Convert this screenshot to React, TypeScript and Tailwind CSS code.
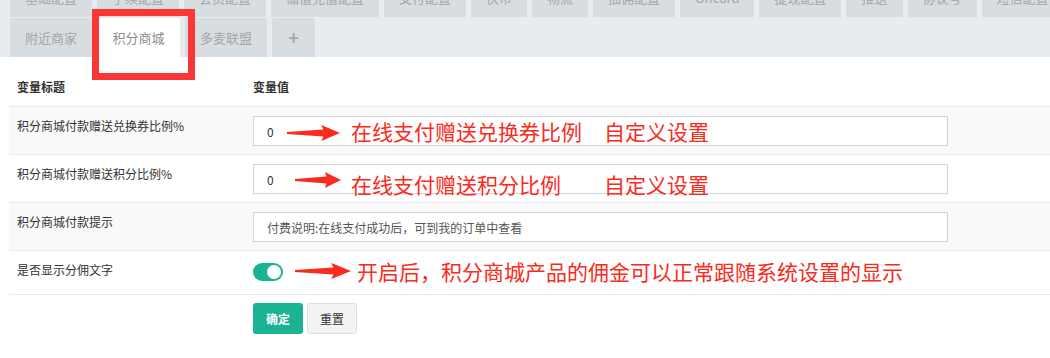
import React from "react";

const topTabs = [
  "基础配置",
  "手续配置",
  "会员配置",
  "储值充值配置",
  "支付配置",
  "快币",
  "物流",
  "抽佣配置",
  "Oncard",
  "提现配置",
  "推送",
  "协议号",
  "短信配置",
];

const Arrow = ({ width = 54 }: { width?: number }) => (
  <svg width={width} height="16" viewBox="0 0 54 16" preserveAspectRatio="none">
    <polygon points="0,7 37,4.5 35,0 54,8 35,16 37,11.5 0,9" fill="#fa2a1c" />
  </svg>
);

type RowProps = {
  label: string;
  shaded?: boolean;
  children: React.ReactNode;
  note?: React.ReactNode;
};

const Row = ({ label, shaded, children, note }: RowProps) => (
  <div
    className={`relative flex border-t border-[#e7eaec] ${shaded ? "bg-[#f9f9f9]" : "bg-white"}`}
  >
    <div className="w-[236px] shrink-0 pl-[8px] pt-[9px] text-[12px] leading-[20px] text-[#333]">
      {label}
    </div>
    <div className="flex-1 pl-[8px] pt-[9px] pb-[8px]">{children}</div>
    {note}
  </div>
);

const Note = ({ children }: { children: React.ReactNode }) => (
  <span className="text-[21px] leading-[28px] text-[#fa2a1c] whitespace-pre">{children}</span>
);

export default function App() {
  return (
    <div
      className="relative w-[1050px] h-[358px] overflow-hidden bg-white"
      style={{ fontFamily: '"Noto Sans CJK SC", "Liberation Sans", sans-serif' }}
    >
      {/* tab strip */}
      <div className="bg-[#e8ecee] pl-[10px] h-[57px]">
        <div className="flex items-end gap-[5px] h-[17px] overflow-hidden">
          {topTabs.map((t) => (
            <div
              key={t}
              className="shrink-0 h-[39px] px-[15px] flex items-center bg-[#d8dde2] text-[13px] text-[#a3a7ab] rounded-t-[2px]"
            >
              {t}
            </div>
          ))}
        </div>
        <div className="flex gap-[5px] mt-[1px] h-[39px]">
          <div className="px-[15px] flex items-center bg-[#d8dde2] text-[13px] text-[#a3a7ab] rounded-t-[2px]">
            附近商家
          </div>
          <div className="w-[83px] flex items-center justify-center bg-white text-[13px] text-[#8c8f92] rounded-t-[2px]">
            积分商城
          </div>
          <div className="px-[15px] flex items-center bg-[#d8dde2] text-[13px] text-[#a3a7ab] rounded-t-[2px]">
            多麦联盟
          </div>
          <div className="w-[43px] flex items-center justify-center bg-[#d8dde2] text-[18px] font-bold text-[#a3a7ab] rounded-t-[2px]">
            +
          </div>
        </div>
      </div>

      {/* highlight box */}
      <div className="absolute left-[92px] top-[9px] w-[103px] h-[71px] border-[7px] border-[#fb3636]" />

      {/* table */}
      <div className="ml-[9px]">
        <div className="flex h-[49px] items-end pb-[10px] text-[12px] font-bold text-[#333]">
          <div className="w-[236px] pl-[8px]">变量标题</div>
          <div className="pl-[8px]">变量值</div>
        </div>

        <Row
          label="积分商城付款赠送兑换券比例%"
          shaded
          note={
            <>
              <div className="absolute left-[278px] top-[18px]">
                <Arrow width={53} />
              </div>
              <div className="absolute left-[342px] top-[10px]">
                <Note>在线支付赠送兑换券比例</Note>
              </div>
              <div className="absolute left-[595px] top-[10px]">
                <Note>自定义设置</Note>
              </div>
            </>
          }
        >
          <input
            readOnly
            value="0"
            className="w-[695px] h-[30px] border border-[#d0d5dd] bg-white px-[13px] text-[12px] text-[#333] outline-none"
          />
        </Row>

        <Row
          label="积分商城付款赠送积分比例%"
          note={
            <>
              <div className="absolute left-[286px] top-[17px]">
                <Arrow width={46} />
              </div>
              <div className="absolute left-[342px] top-[15px]">
                <Note>在线支付赠送积分比例</Note>
              </div>
              <div className="absolute left-[595px] top-[15px]">
                <Note>自定义设置</Note>
              </div>
            </>
          }
        >
          <input
            readOnly
            value="0"
            className="w-[695px] h-[30px] border border-[#d0d5dd] bg-white px-[13px] text-[12px] text-[#333] outline-none"
          />
        </Row>

        <Row label="积分商城付款提示" shaded>
          <input
            readOnly
            value="付费说明:在线支付成功后，可到我的订单中查看"
            className="w-[695px] h-[30px] border border-[#d0d5dd] bg-white px-[13px] text-[12px] text-[#555] outline-none"
          />
        </Row>

        <Row
          label="是否显示分佣文字"
          note={
            <>
              <div className="absolute left-[286px] top-[12px]">
                <Arrow width={56} />
              </div>
              <div className="absolute left-[348px] top-[6px]">
                <Note>开启后，积分商城产品的佣金可以正常跟随系统设置的显示</Note>
              </div>
            </>
          }
        >
          <div className="relative mt-[3px] mb-[5px] w-[30px] h-[18px] rounded-full bg-[#1ab394]">
            <div className="absolute right-[2px] top-[2px] w-[14px] h-[14px] rounded-full bg-white" />
          </div>
        </Row>

        <div className="flex gap-[4px] border-t border-[#e7eaec] pl-[244px] pt-[8px]">
          <button className="w-[50px] h-[31px] rounded-[3px] bg-[#1ab394] text-[12px] font-bold text-white">
            确定
          </button>
          <button className="w-[50px] h-[31px] rounded-[3px] border border-[#ddd] bg-[#f3f3f3] text-[12px] text-[#333]">
            重置
          </button>
        </div>
      </div>
    </div>
  );
}
